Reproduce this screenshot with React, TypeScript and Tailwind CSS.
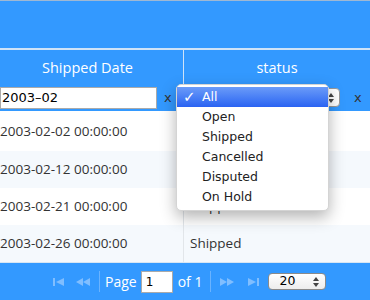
import React from "react";

const rows = [
  { date: "2003-02-02 00:00:00", status: "Shipped" },
  { date: "2003-02-12 00:00:00", status: "Shipped" },
  { date: "2003-02-21 00:00:00", status: "Shipped" },
  { date: "2003-02-26 00:00:00", status: "Shipped" },
];

const options = ["All", "Open", "Shipped", "Cancelled", "Disputed", "On Hold"];

// little pager arrows, drawn
const PagerIcon: React.FC<{ kind: "first" | "prev" | "next" | "last" }> = ({ kind }) => {
  const fill = "#80beff";
  if (kind === "first")
    return (
      <svg width="12" height="8" viewBox="0 0 12 8">
        <rect x="0" y="0" width="2" height="8" fill={fill} />
        <polygon points="3,4 11,0 11,8" fill={fill} />
      </svg>
    );
  if (kind === "prev")
    return (
      <svg width="15" height="8" viewBox="0 0 15 8">
        <polygon points="0,4 7,0 7,8" fill={fill} />
        <polygon points="7,4 14,0 14,8" fill={fill} />
      </svg>
    );
  if (kind === "next")
    return (
      <svg width="15" height="8" viewBox="0 0 15 8">
        <polygon points="0,0 7,4 0,8" fill={fill} />
        <polygon points="7,0 14,4 7,8" fill={fill} />
      </svg>
    );
  return (
    <svg width="12" height="8" viewBox="0 0 12 8">
      <polygon points="0,0 8,4 0,8" fill={fill} />
      <rect x="9" y="0" width="2" height="8" fill={fill} />
    </svg>
  );
};

const UpDown = () => (
  <svg width="6" height="10" viewBox="0 0 6 10">
    <polygon points="0,4 3,0 6,4" fill="#444" />
    <polygon points="0,6 3,10 6,6" fill="#444" />
  </svg>
);

export default function App() {
  return (
    <div className="relative w-[370px] h-[300px] overflow-hidden bg-white font-['Open_Sans',sans-serif]">
      {/* toolbar area */}
      <div className="h-[48px] bg-[#3399ff] border-t border-[#9fb8d3]"></div>

      {/* header */}
      <div className="flex h-[36px] bg-[#3399ff] border-t-2 border-[#cfe3f8] text-white text-[14.5px]">
        <div className="w-[184px] border-r border-[#cfe3f8] flex items-center justify-center pr-2 pt-[2px]">
          Shipped Date
        </div>
        <div className="flex-1 flex items-center justify-center pt-[2px]">status</div>
      </div>

      {/* filters */}
      <div className="flex h-[27px] bg-[#3399ff] items-center font-['DejaVu_Sans',sans-serif] text-[13px]">
        <div className="w-[184px] flex items-center">
          <div className="w-[157px] h-[22px] bg-white border border-[#aaa] flex items-center pl-[1px] text-black">
            2003–02
          </div>
          <span className="ml-[7px] text-[#333]">x</span>
        </div>
        <div className="flex-1 flex items-center">
          <div className="ml-[6px] w-[150px] h-[19px] bg-white border border-[#999] rounded-[4px] flex items-center justify-end pr-[5px]">
            <UpDown />
          </div>
          <span className="ml-[14px] text-[#333]">x</span>
        </div>
      </div>

      {/* rows */}
      {rows.map((r, i) => (
        <div
          key={i}
          className={`flex text-[13.5px] text-[#333] ${i === 0 ? "h-[40px]" : "h-[37px]"} ${
            i % 2 === 1 ? "bg-[#f5f9fd]" : "bg-white"
          }`}
        >
          <div className="w-[184px] border-r border-[#e2e6ea] flex items-center">{r.date}</div>
          <div className="flex-1 flex items-center pl-[6px]">{r.status}</div>
        </div>
      ))}

      {/* pager */}
      <div className="flex items-center h-[38px] bg-[#3399ff] border-t border-[#d8e6f3] pl-[53px] text-white text-[14px]">
        <PagerIcon kind="first" />
        <div className="ml-[11px]">
          <PagerIcon kind="prev" />
        </div>
        <div className="ml-[8px] w-px h-[21px] bg-[#6ab3ff]"></div>
        <span className="ml-[5px]">Page</span>
        <div className="ml-[4px] w-[32px] h-[22px] bg-white border border-[#aaa] flex items-center pl-[4px] text-black font-['DejaVu_Sans',sans-serif] text-[12px]">
          1
        </div>
        <span className="ml-[5px]">of 1</span>
        <div className="ml-[8px] w-px h-[21px] bg-[#6ab3ff]"></div>
        <div className="ml-[9px]">
          <PagerIcon kind="next" />
        </div>
        <div className="ml-[13px]">
          <PagerIcon kind="last" />
        </div>
        <div className="ml-[8px] w-[58px] h-[17px] rounded-[4px] bg-gradient-to-b from-white to-[#ededed] border border-[#8a8a8a] flex items-center justify-between pl-[10px] pr-[6px] text-black font-['DejaVu_Sans',sans-serif] text-[12.5px]">
          <span>20</span>
          <UpDown />
        </div>
      </div>

      {/* open status menu */}
      <div className="absolute left-[176px] top-[84px] w-[153px] h-[127px] bg-white rounded-[5px] shadow-[0_6px_16px_rgba(0,0,0,0.3)] border border-[#d4d4d4] pt-[2px] font-['DejaVu_Sans',sans-serif] text-[12.5px] text-[#222]">
        {options.map((o, i) => (
          <div
            key={o}
            className={`h-[20px] flex items-center ${
              i === 0 ? "bg-gradient-to-b from-[#6b9bf8] to-[#2a62f2] text-white" : ""
            }`}
          >
            <span className="w-[25px] pl-[6px] text-[15px] font-bold">{i === 0 ? "✓" : ""}</span>
            <span>{o}</span>
          </div>
        ))}
      </div>
    </div>
  );
}
